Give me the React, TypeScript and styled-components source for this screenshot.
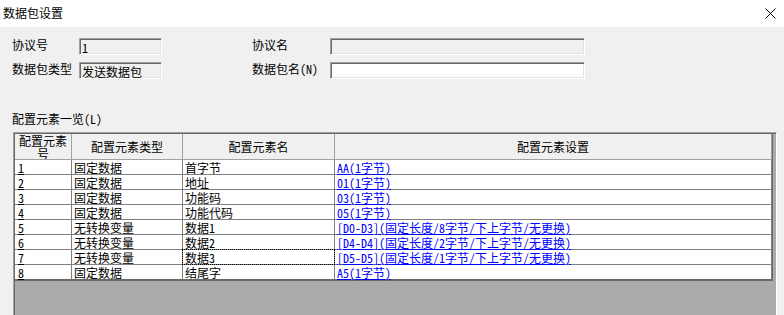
import React from "react";
import styled, { createGlobalStyle } from "styled-components";

const Global = createGlobalStyle`
  html, body { margin: 0; padding: 0; width: 784px; height: 315px; overflow: hidden; background: #f0f0f0; }
  * { box-sizing: border-box; }
`;

const MONO = `"Noto Sans Mono CJK SC", "Noto Sans CJK SC", monospace`;

const Window = styled.div`
  width: 784px;
  height: 315px;
  display: flex;
  flex-direction: column;
  overflow: hidden;
  background: #f0f0f0;
  font-family: ${MONO};
  font-size: 12px;
  color: #000;
`;

const TitleBar = styled.div`
  height: 27px;
  flex: none;
  background: #fff;
  display: flex;
  align-items: center;
  justify-content: space-between;
  padding: 0 8px 0 3px;
`;

const Title = styled.div`
  font-family: "Noto Sans CJK SC", sans-serif;
  font-size: 12px;
  line-height: 14px;
  color: #000;
  padding-bottom: 1px;
`;

const CloseIcon = styled.svg`
  width: 11px;
  height: 11px;
  display: block;
`;

const Body = styled.div`
  flex: 1;
  display: flex;
  flex-direction: column;
  padding-top: 11px;
  min-height: 0;
`;

const Form = styled.div`
  display: grid;
  grid-template-columns: 67px 83px 90px 78px 255px;
  grid-template-rows: 17px 17px;
  row-gap: 7px;
  padding-left: 12px;
`;

const Label = styled.div`
  line-height: 14px;
  white-space: nowrap;
`;

const Spacer = styled.div``;

const Field = styled.div<{ $disabled?: boolean }>`
  height: 17px;
  background: ${(p) => (p.$disabled ? "#f0f0f0" : "#fff")};
  border-top: 1px solid #a0a0a0;
  border-left: 1px solid #a0a0a0;
  border-right: 1px solid #fff;
  border-bottom: 1px solid #fff;
  box-shadow: inset 1px 1px 0 #696969, inset -1px -1px 0 #e3e3e3;
  display: flex;
  align-items: center;
  padding: 1px 0 0 2px;
  line-height: 13px;
  white-space: nowrap;
  overflow: hidden;
`;

const SectionLabel = styled.div`
  margin-top: 33px;
  padding-left: 12px;
  line-height: 14px;
  height: 14px;
`;

const ListBox = styled.div`
  margin: 6px 0 0 13px;
  width: 764px;
  flex: 1;
  min-height: 200px;
  background: #ababab;
  border-top: 1px solid #a0a0a0;
  border-left: 1px solid #a0a0a0;
  border-right: 1px solid #fff;
  box-shadow: inset 1px 1px 0 #696969;
  padding: 1px 0 0 1px;
`;

const Grid = styled.div`
  width: 758px;
  display: grid;
  grid-template-columns: 57px 111px 152px 437px;
  border-right: 1px solid #696969;
  border-bottom: 1px solid #696969;
`;

const HeadCell = styled.div`
  height: 26px;
  background: #f0f0f0;
  border-right: 1px solid #a0a0a0;
  border-bottom: 1px solid #a0a0a0;
  display: flex;
  align-items: center;
  justify-content: center;
  text-align: center;
  line-height: 13px;
  overflow: hidden;
`;

const WrapHead = styled(HeadCell)`
  align-items: flex-start;
  padding: 0 3px;
`;

const Cell = styled.div<{ $last?: boolean; $focus?: boolean }>`
  position: relative;
  height: 15px;
  background: #fff;
  border-right: 1px solid #808080;
  border-bottom: 1px solid ${(p) => (p.$last ? "#696969" : "#808080")};
  padding: 1px 0 0 2px;
  line-height: 13px;
  white-space: nowrap;
  ${(p) =>
    p.$focus
      ? `&::after {
    content: "";
    position: absolute;
    top: -1px;
    left: -1px;
    right: -1px;
    bottom: -1px;
    border: 1px dotted #000;
    pointer-events: none;
  }`
      : ""}
`;

const NumCell = styled(Cell)`
  padding-left: 3px;
  text-decoration: underline;
`;

const LinkText = styled.span`
  color: #0000ff;
  text-decoration: underline;
`;

type Row = { no: string; type: string; name: string; setting: string };

const rows: Row[] = [
  { no: "1", type: "固定数据", name: "首字节", setting: "AA(1字节)" },
  { no: "2", type: "固定数据", name: "地址", setting: "01(1字节)" },
  { no: "3", type: "固定数据", name: "功能码", setting: "03(1字节)" },
  { no: "4", type: "固定数据", name: "功能代码", setting: "05(1字节)" },
  { no: "5", type: "无转换变量", name: "数据1", setting: "[D0-D3](固定长度/8字节/下上字节/无更换)" },
  { no: "6", type: "无转换变量", name: "数据2", setting: "[D4-D4](固定长度/2字节/下上字节/无更换)" },
  { no: "7", type: "无转换变量", name: "数据3", setting: "[D5-D5](固定长度/1字节/下上字节/无更换)" },
  { no: "8", type: "固定数据", name: "结尾字", setting: "A5(1字节)" },
];

export default function App() {
  return (
    <>
      <Global />
      <Window>
        <TitleBar>
          <Title>数据包设置</Title>
          <CloseIcon viewBox="0 0 11 11">
            <path d="M0.5 0.5 L10.5 10.5 M10.5 0.5 L0.5 10.5" stroke="#000" strokeWidth="1" fill="none" />
          </CloseIcon>
        </TitleBar>
        <Body>
          <Form>
            <Label>协议号</Label>
            <Field $disabled>1</Field>
            <Spacer />
            <Label>协议名</Label>
            <Field $disabled />
            <Label>数据包类型</Label>
            <Field $disabled>发送数据包</Field>
            <Spacer />
            <Label>数据包名(N)</Label>
            <Field />
          </Form>
          <SectionLabel>配置元素一览(L)</SectionLabel>
          <ListBox>
            <Grid>
              <WrapHead>配置元素号</WrapHead>
              <HeadCell>配置元素类型</HeadCell>
              <HeadCell>配置元素名</HeadCell>
              <HeadCell>配置元素设置</HeadCell>
              {rows.map((r, i) => {
                const last = i === rows.length - 1;
                return (
                  <React.Fragment key={r.no}>
                    <NumCell $last={last}>{r.no}</NumCell>
                    <Cell $last={last}>{r.type}</Cell>
                    <Cell $last={last} $focus={r.no === "7"}>{r.name}</Cell>
                    <Cell $last={last}>
                      <LinkText>{r.setting}</LinkText>
                    </Cell>
                  </React.Fragment>
                );
              })}
            </Grid>
          </ListBox>
        </Body>
      </Window>
    </>
  );
}
